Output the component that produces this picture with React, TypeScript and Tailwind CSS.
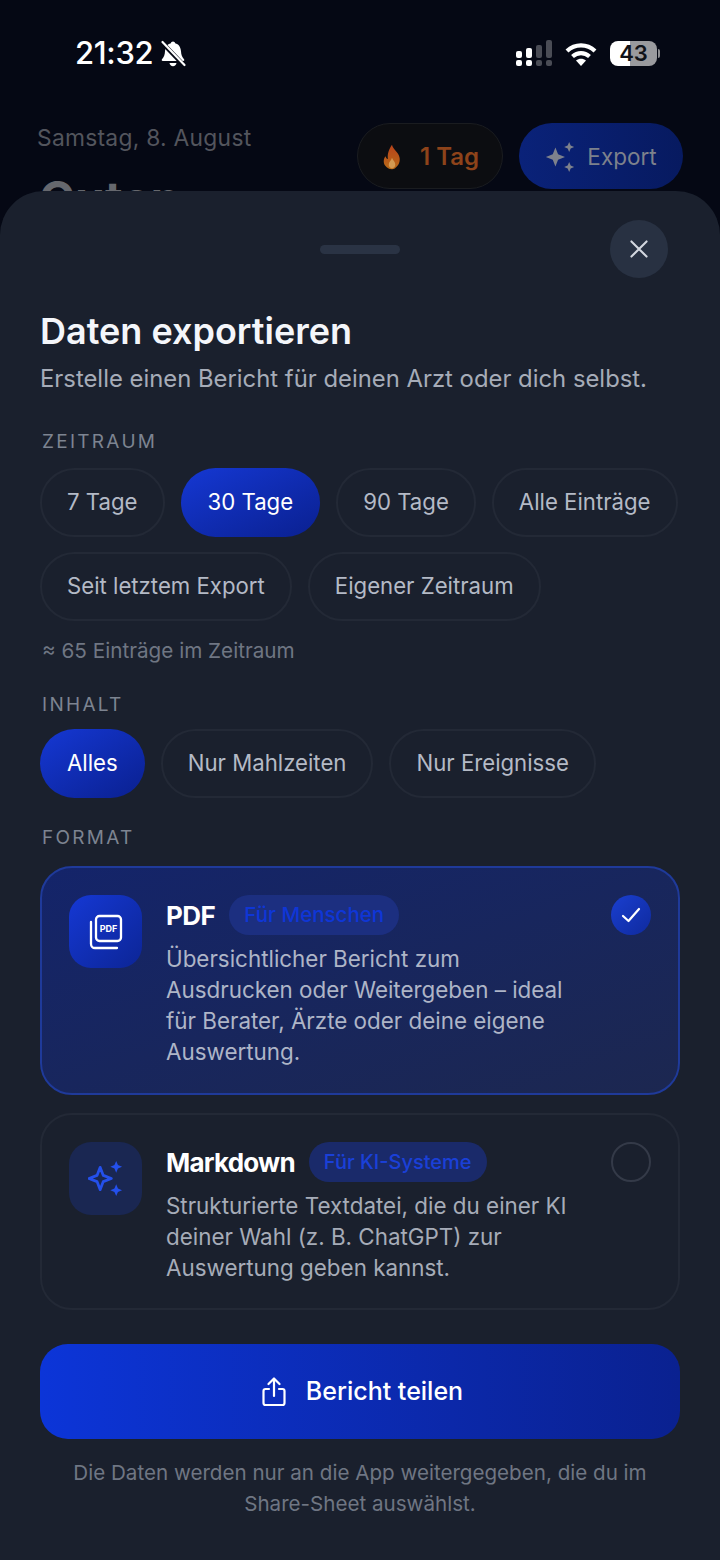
import React from "react";

const Sparkles = ({ className, filled }: { className?: string; filled?: boolean }) => (
  <svg viewBox="0 0 36 36" className={className} fill={filled ? "currentColor" : "none"} stroke="currentColor" strokeWidth={filled ? 0 : 2.8} strokeLinejoin="round">
    <path d="M12.500 6.500l3.200 8.300 8.300 3.200-8.300 3.200-3.200 8.300-3.200-8.300L1 18l8.300-3.200z" />
    <path fill="currentColor" stroke="none" d="M29 0l1.800 4.200L35 6l-4.200 1.800L29 12l-1.800-4.200L23 6l4.200-1.800zM29 24l1.800 4.200L35 30l-4.200 1.800L29 36l-1.800-4.200L23 30l4.200-1.800z" />
  </svg>
);

const Chip = ({ label, active }: { label: string; active?: boolean }) => (
  <div
    className={
      active
        ? "h-[69px] px-[27px] pb-[2px] flex items-center rounded-full bg-gradient-to-br from-[#1538d4] to-[#0a2090] text-white text-[22.200px]"
        : "h-[69px] px-[25px] pb-[2px] flex items-center rounded-full border-2 border-[#232936] text-[#b4bac6] text-[22.200px]"
    }
  >
    {label}
  </div>
);

const Label = ({ children }: { children: React.ReactNode }) => (
  <div className="ml-[2px] text-[19px] leading-[26px] tracking-[0.12em] text-[#7d8491]">{children}</div>
);

export default function App() {
  return (
    <div className="relative w-[720px] h-[1560px] overflow-hidden bg-[#050814]" style={{ fontFamily: "Inter, 'Noto Sans', sans-serif" }}>
      <div className="h-[191px] overflow-hidden">
        <div className="h-[96px] pl-[75px] pr-[60px] pt-[33px] flex justify-between">
          <div className="flex items-start gap-[6px]">
            <span className="text-[31px] leading-[40px] font-medium text-white tracking-[-0.01em]">21:32</span>
            <svg viewBox="0 0 28 28" className="w-[28px] h-[28px] mt-[7px] text-white" fill="currentColor">
              <path d="M14 1.500c1.100 0 2 .8 2.100 1.800 3.700.9 5.600 4 5.900 8 .2 3.600 1 5.800 3 8 .6.8.2 1.700-.8 1.700H3.800c-1 0-1.400-.9-.8-1.700 2-2.200 2.800-4.400 3-8 .3-4 2.200-7.100 5.900-8C12 2.300 12.900 1.500 14 1.500zM10.500 23h7c-.2 1.900-1.700 3.200-3.500 3.200s-3.300-1.300-3.500-3.200z" />
              <path d="M3 2.500l22 23" stroke="#050814" strokeWidth="4.500" />
              <path d="M3.500 2l22 23" stroke="#fff" strokeWidth="2.200" strokeLinecap="round" />
            </svg>
          </div>
          <div className="flex items-start gap-[13px] pt-[8px]">
            <svg viewBox="0 0 36 26" className="w-[36px] h-[26px] -mt-[1px]">
              <g fill="#fff">
                <rect x="0" y="11" width="6" height="7" rx="2" />
                <rect x="0" y="20" width="6" height="6" rx="2" />
                <rect x="10" y="8" width="6" height="10" rx="2" />
                <rect x="10" y="20" width="6" height="6" rx="2" />
              </g>
              <g fill="#4a4c55">
                <rect x="20" y="5" width="6" height="13" rx="2" />
                <rect x="20" y="20" width="6" height="6" rx="2" />
                <rect x="30" y="0" width="6" height="18" rx="2" />
                <rect x="30" y="20" width="6" height="6" rx="2" />
              </g>
            </svg>
            <svg viewBox="0 0 32 26" className="w-[32px] h-[26px]" fill="none" stroke="#fff" strokeWidth="4.200">
              <path d="M2 10C10 2.500 22 2.500 30 10" />
              <path d="M7.500 15.500c5-4.500 12-4.500 17 0" />
              <path d="M16 25l-5-5.500c3-2.200 7-2.200 10 0z" fill="#fff" stroke="none" />
            </svg>
            <div className="flex items-center">
              <div className="w-[47px] h-[25px] rounded-[8px] flex items-center justify-center text-[22px] font-semibold text-[#101218] bg-[linear-gradient(90deg,#ffffff_0%,#ffffff_43%,#9a9a9e_43%,#9a9a9e_100%)]">43</div>
              <div className="w-[2px] h-[9px] ml-[1px] rounded-r bg-[#8c8c90]" />
            </div>
          </div>
        </div>
        <div className="pl-[37px] pr-[37px] flex justify-between">
          <div>
            <div className="text-[22.800px] leading-[28px] text-[#53555d] mt-[28px] tracking-[0.012em]">Samstag, 8. August</div>
            <div className="text-[48px] leading-[50px] font-bold text-[#66686e] mt-[22px] ml-[2px]">Guten</div>
          </div>
          <div className="flex gap-[16px] mt-[27px]">
            <div className="h-[66px] w-[146px] pt-[2px] rounded-full border border-[#1a1c20] bg-[#0c0d11] flex items-center justify-center gap-[17px]">
              <svg viewBox="0 0 24 32" className="w-[22px] h-[26px]">
                <defs>
                  <linearGradient id="fl" x1="0" y1="0" x2="0" y2="1">
                    <stop offset="0" stopColor="#b8421a" />
                    <stop offset="1" stopColor="#b86a18" />
                  </linearGradient>
                </defs>
                <path fill="url(#fl)" d="M12 1c1 5 6 8 8.500 13 2 4.500 1 10-2 13-2 2.500-4 4-6.500 4-3.500 0-6.500-1.500-8.500-4.500C1 23 1.500 18 4 15c.5 2 1.500 3 3 3.500C6 12 8.500 6 12 1z" />
                <path fill="#d39a52" d="M12 17c1 3 4 4.500 4 8.500 0 2.500-2 4.500-4 4.500s-4-2-4-4.500c0-3.500 3-5 4-8.500z" />
              </svg>
              <span className="text-[24px] font-semibold text-[#8e431a]">1 Tag</span>
            </div>
            <div className="h-[66px] w-[164px] pt-[2px] rounded-full bg-gradient-to-r from-[#0a2279] to-[#071a60] flex items-center justify-center gap-[12px]">
              <Sparkles filled className="w-[30px] h-[30px] text-[#7d818c]" />
              <span className="text-[22.500px] text-[#7d818c]">Export</span>
            </div>
          </div>
        </div>
      </div>

      <div className="h-[1369px] rounded-t-[44px] bg-[#1a202d] px-[40px]">
        <div className="relative h-[87px]">
          <div className="absolute left-[280px] top-[54px] w-[80px] h-[9px] rounded-full bg-[#2a3344]" />
          <div className="absolute right-[12px] top-[29px] w-[58px] h-[58px] rounded-full bg-[#283142] flex items-center justify-center">
            <svg viewBox="0 0 24 24" className="w-[26px] h-[26px]" fill="none" stroke="#d3d7df" strokeWidth="1.900" strokeLinecap="round">
              <path d="M5 5l14 14M19 5L5 19" />
            </svg>
          </div>
        </div>
        <h1 className="mt-[30px] text-[36px] leading-[46px] font-semibold text-[#f4f6fa]">Daten exportieren</h1>
        <p className="mt-[9px] text-[23.850px] leading-[31px] text-[#a6acb8]">Erstelle einen Bericht für deinen Arzt oder dich selbst.</p>

        <div className="mt-[35px]"><Label>ZEITRAUM</Label></div>
        <div className="mt-[13px] flex flex-wrap gap-x-[16px] gap-y-[15px]">
          <Chip label="7 Tage" />
          <Chip label="30 Tage" active />
          <Chip label="90 Tage" />
          <Chip label="Alle Einträge" />
          <Chip label="Seit letztem Export" />
          <Chip label="Eigener Zeitraum" />
        </div>
        <div className="mt-[15px] ml-[2px] text-[20.700px] leading-[30px] text-[#6f7683]">≈ 65 Einträge im Zeitraum</div>

        <div className="mt-[26px]"><Label>INHALT</Label></div>
        <div className="mt-[11px] flex gap-x-[16px]">
          <Chip label="Alles" active />
          <Chip label="Nur Mahlzeiten" />
          <Chip label="Nur Ereignisse" />
        </div>

        <div className="mt-[27px]"><Label>FORMAT</Label></div>

        <div className="mt-[15px] h-[229px] rounded-[32px] border-2 border-[#1f3a9a] bg-gradient-to-br from-[#14246a] to-[#1c2750] pl-[27px] pr-[27px] pt-[27px] flex">
          <div className="w-[73px] h-[73px] rounded-[22px] bg-gradient-to-br from-[#1538d4] to-[#0c2596] flex items-center justify-center shrink-0">
            <svg viewBox="0 0 36 36" className="w-[36px] h-[36px]" fill="none" stroke="#fff" strokeWidth="2.300" strokeLinejoin="round" strokeLinecap="round">
              <rect x="8" y="2" width="25" height="25" rx="3.500" />
              <path d="M3 8v22a4 4 0 0 0 4 4h22" />
              <text x="20.500" y="18" textAnchor="middle" fontSize="9" fontWeight="700" fill="#fff" stroke="none" style={{ fontFamily: "Inter, sans-serif" }}>PDF</text>
            </svg>
          </div>
          <div className="ml-[24px] flex-1 min-w-0">
            <div className="flex items-center h-[40px] gap-[14px]">
              <span className="text-[26px] font-bold tracking-[-0.02em] text-white">PDF</span>
              <span className="h-[40px] px-[15px] rounded-full bg-[#1c2f80] flex items-center text-[20.500px] font-medium text-[#0f36d6]">Für Menschen</span>
            </div>
            <p className="mt-[8px] w-[420px] text-[22.400px] leading-[31px] text-[#aeb5c7]">Übersichtlicher Bericht zum Ausdrucken oder Weitergeben – ideal für Berater, Ärzte oder deine eigene Auswertung.</p>
          </div>
          <div className="w-[40px] h-[40px] rounded-full bg-gradient-to-br from-[#1a3fd0] to-[#0f2a9e] flex items-center justify-center shrink-0">
            <svg viewBox="0 0 24 24" className="w-[24px] h-[24px]" fill="none" stroke="#fff" strokeWidth="2.200" strokeLinecap="round" strokeLinejoin="round">
              <path d="M4 13l5.500 5L20 6" />
            </svg>
          </div>
        </div>

        <div className="mt-[18px] h-[197px] rounded-[32px] border-2 border-[#232936] pl-[27px] pr-[27px] pt-[27px] flex">
          <div className="w-[73px] h-[73px] rounded-[22px] bg-[#1a2752] flex items-center justify-center shrink-0">
            <Sparkles className="w-[35px] h-[35px] text-[#2450ec]" />
          </div>
          <div className="ml-[24px] flex-1 min-w-0">
            <div className="flex items-center h-[40px] gap-[14px]">
              <span className="text-[26px] font-bold tracking-[-0.03em] text-white">Markdown</span>
              <span className="h-[40px] px-[15px] rounded-full bg-[#1a2a6a] flex items-center text-[20px] font-medium text-[#1a40d8]">Für KI-Systeme</span>
            </div>
            <p className="mt-[8px] w-[420px] text-[22.400px] leading-[31px] text-[#a6acb8]">Strukturierte Textdatei, die du einer KI deiner Wahl (z. B. ChatGPT) zur Auswertung geben kannst.</p>
          </div>
          <div className="w-[40px] h-[40px] rounded-full border-2 border-[#343a48] shrink-0" />
        </div>

        <div className="mt-[34px] h-[95px] pl-[5px] rounded-[28px] bg-gradient-to-r from-[#0c35d8] to-[#0a2190] flex items-center justify-center gap-[20px]">
          <svg viewBox="0 0 24 30" className="w-[24px] h-[30px]" fill="none" stroke="#fff" strokeWidth="2.200" strokeLinecap="round" strokeLinejoin="round">
            <path d="M12 19V2M6.500 7L12 1.500 17.500 7" />
            <path d="M7 12H3.500a2 2 0 0 0-2 2v12a2 2 0 0 0 2 2h17a2 2 0 0 0 2-2V14a2 2 0 0 0-2-2H17" />
          </svg>
          <span className="text-[25px] font-medium text-white">Bericht teilen</span>
        </div>

        <p className="mt-[18px] text-center text-[20.600px] leading-[31px] text-[#6f7683]">Die Daten werden nur an die App weitergegeben, die du im<br />Share-Sheet auswählst.</p>
      </div>
    </div>
  );
}
